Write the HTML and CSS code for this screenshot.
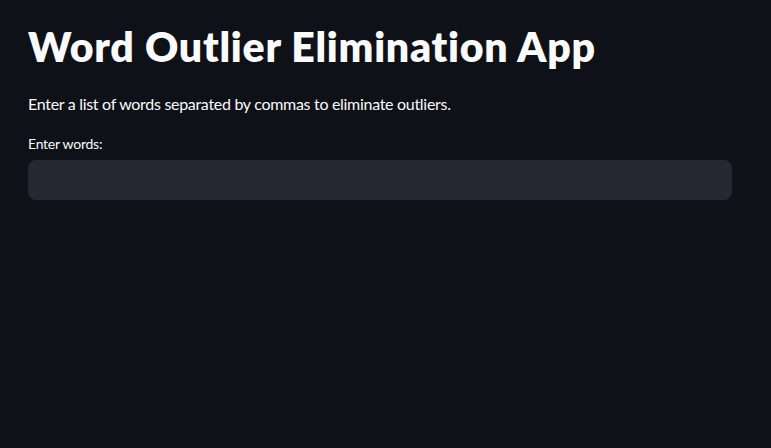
FILE: index.html
```html
<!DOCTYPE html>
<html>
<head>
<meta charset="utf-8">
<link rel="stylesheet" href="styles.css">
</head>
<body>
<main class="app">
  <h1 class="title">Word Outlier Elimination App</h1>
  <p class="intro">Enter a list of words separated by commas to eliminate outliers.</p>
  <div class="field">
    <label class="label" for="words">Enter words:</label>
    <input class="input" id="words" type="text">
  </div>
</main>
</body>
</html>
```
FILE: styles.css
```css
html, body {
  margin: 0;
  padding: 0;
  background: #0e1117;
  height: 100%;
}
body {
  font-family: Lato, "Noto Sans", sans-serif;
  color: #fafafa;
  font-variant-ligatures: none;
}
.app {
  width: 704px;
  padding: 22px 28px 0 28px;
  display: flex;
  flex-direction: column;
}
.title {
  margin: 0;
  font-size: 41px;
  font-weight: 800;
  line-height: 50px;
  letter-spacing: 0.75px;
}
.intro {
  margin: 20px 0 0 0;
  font-size: 16px;
  line-height: 24px;
  letter-spacing: -0.3px;
}
.field {
  margin-top: 18px;
  display: flex;
  flex-direction: column;
  gap: 6px;
}
.label {
  font-size: 14px;
  line-height: 20px;
  letter-spacing: -0.25px;
}
.input {
  box-sizing: border-box;
  width: 100%;
  height: 40px;
  border: none;
  border-radius: 8px;
  background: #262730;
  outline: none;
  margin: 0;
}
```
